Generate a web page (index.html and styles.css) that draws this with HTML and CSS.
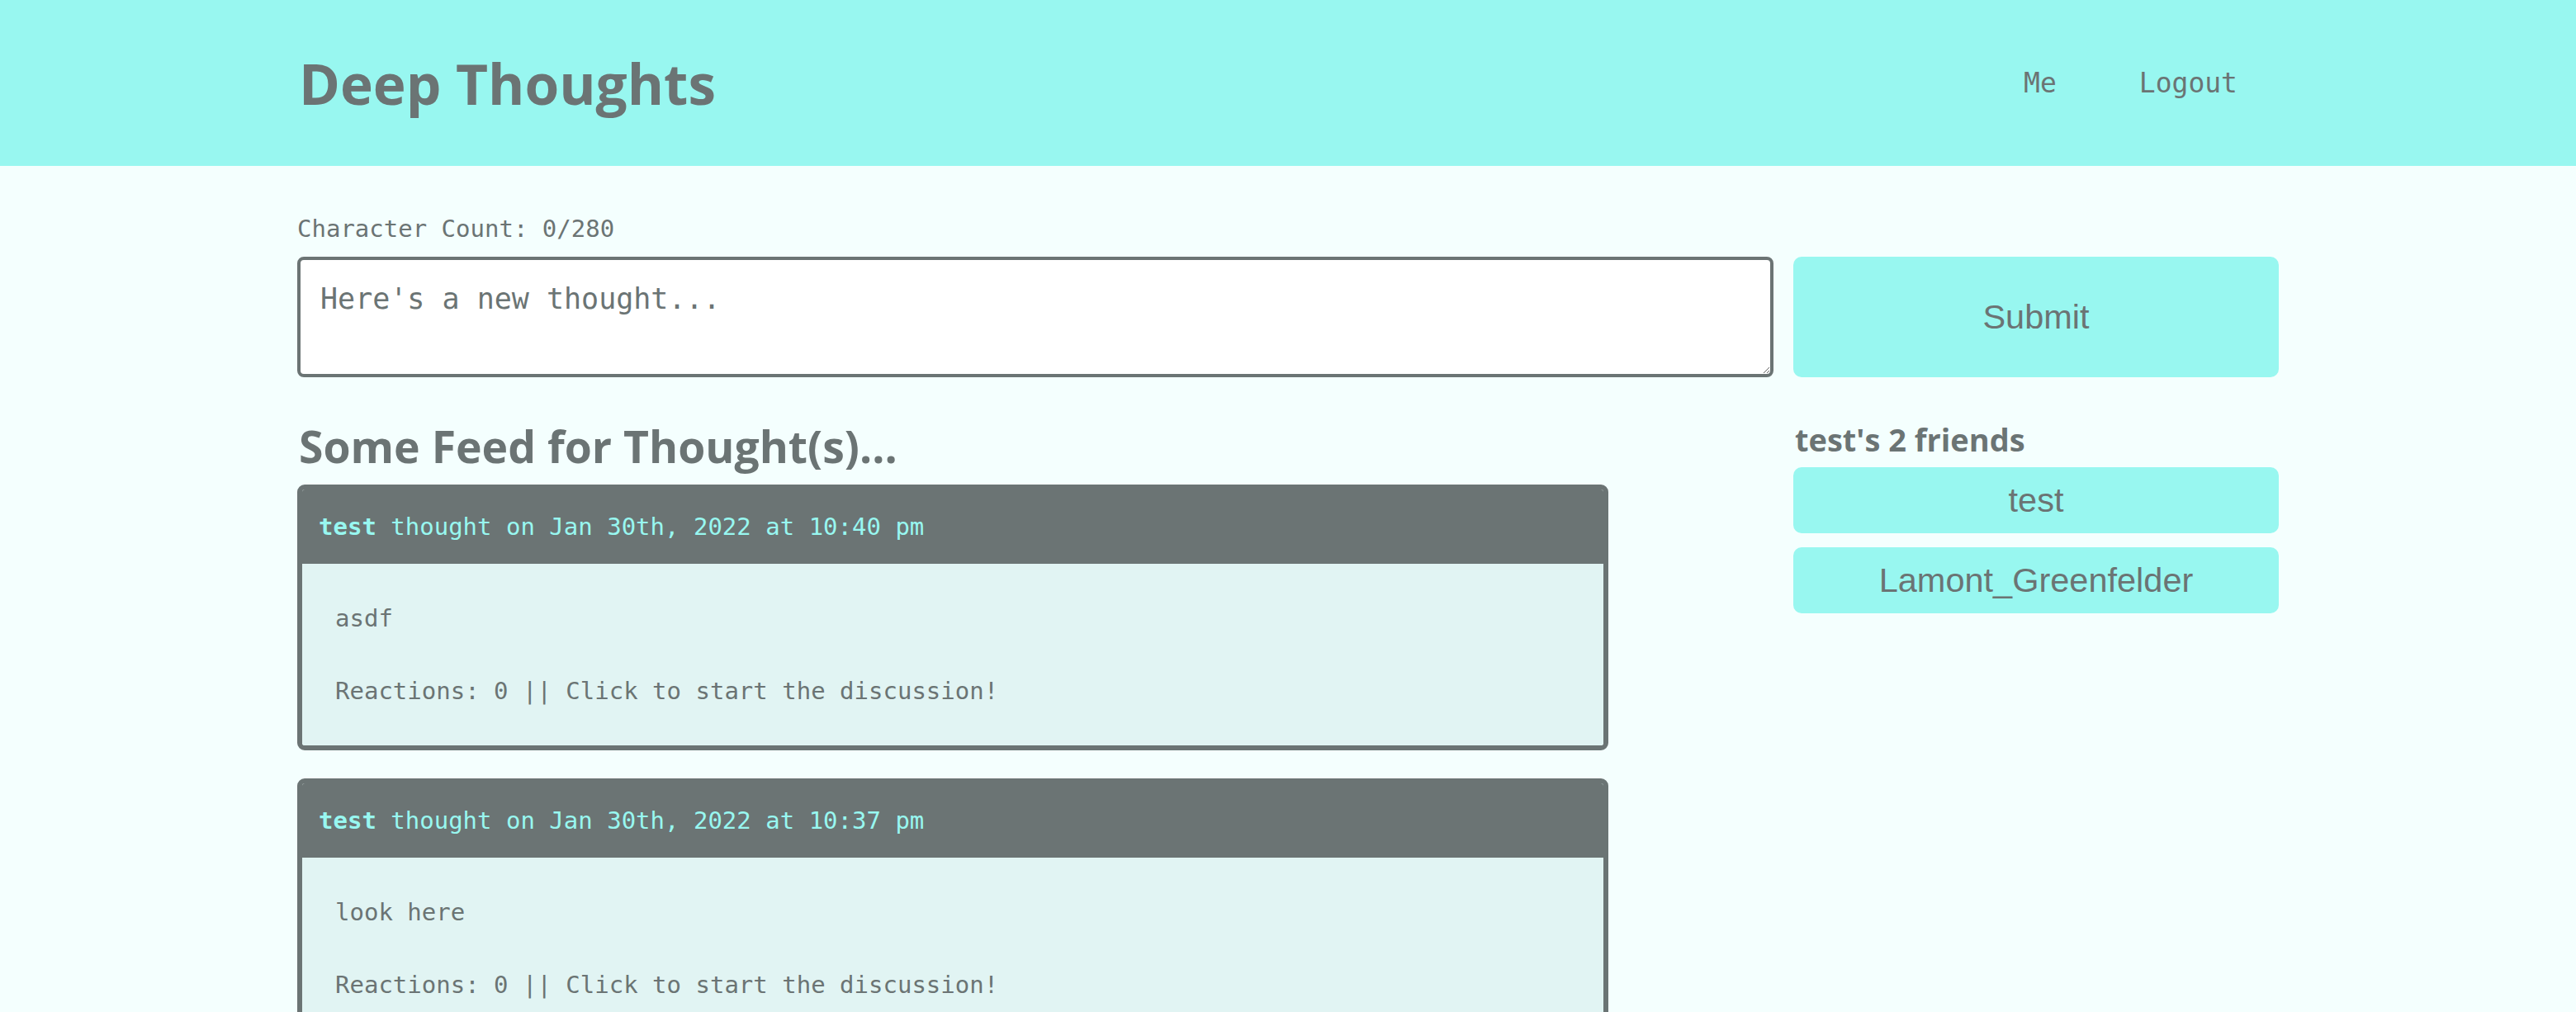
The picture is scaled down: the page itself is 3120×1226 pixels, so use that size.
FILE: index.html
```html
<!DOCTYPE html>
<html lang="en">
<head>
<meta charset="utf-8">
<title>Deep Thoughts</title>
<link rel="stylesheet" href="styles.css">
</head>
<body>
<header class="site-header">
  <div class="container header-row">
    <a class="brand" href="#">Deep Thoughts</a>
    <nav class="nav">
      <a href="#">Me</a>
      <a href="#">Logout</a>
    </nav>
  </div>
</header>
<main class="container">
  <p class="char-count">Character Count: 0/280</p>
  <form class="thought-form">
    <textarea class="thought-input" placeholder="Here's a new thought..."></textarea>
    <button class="btn" type="button">Submit</button>
  </form>
  <div class="content-row">
    <section class="feed">
      <h3 class="feed-title">Some Feed for Thought(s)...</h3>
      <article class="card">
        <div class="card-header"><b>test</b> thought on Jan 30th, 2022 at 10:40 pm</div>
        <div class="card-body">
          <p>asdf</p>
          <p>Reactions: 0 || Click to start the discussion!</p>
        </div>
      </article>
      <article class="card">
        <div class="card-header"><b>test</b> thought on Jan 30th, 2022 at 10:37 pm</div>
        <div class="card-body">
          <p>look here</p>
          <p>Reactions: 0 || Click to start the discussion!</p>
        </div>
      </article>
    </section>
    <aside class="friends">
      <h5 class="friends-title">test's 2 friends</h5>
      <button class="btn friend-btn" type="button">test</button>
      <button class="btn friend-btn" type="button">Lamont_Greenfelder</button>
    </aside>
  </div>
</main>
</body>
</html>
```
FILE: styles.css
```css
html, body {
  margin: 0;
  padding: 0;
}
body {
  background: #f4fffe;
  color: #6b7474;
  font-family: "DejaVu Sans Mono", "Liberation Mono", monospace;
  font-size: 29px;
  line-height: 44px;
}
.container {
  width: 2400px;
  margin: 0 auto;
}
.site-header {
  background: #98f7f0;
  height: 201px;
  display: flex;
  align-items: center;
}
.header-row {
  display: flex;
  align-items: center;
  justify-content: space-between;
}
.brand {
  font-family: "Open Sans", sans-serif;
  font-weight: 700;
  font-size: 67.5px;
  line-height: 80px;
  color: #6b7474;
  text-decoration: none;
  padding-left: 2px;
}
.nav {
  display: flex;
}
.nav a {
  color: #6b7474;
  text-decoration: none;
  font-size: 33px;
  margin: 0 50px;
}
.char-count {
  margin: 54px 0 12px;
}
.thought-form {
  display: grid;
  grid-template-columns: 1788px 588px;
  column-gap: 24px;
}
.thought-input {
  box-sizing: border-box;
  height: 146px;
  width: 100%;
  border: 4px solid #6b7474;
  border-radius: 8px;
  background: #fff;
  padding: 26px 24px;
  font-family: "DejaVu Sans Mono", "Liberation Mono", monospace;
  font-size: 35px;
  line-height: 42px;
  color: #6b7474;
  margin: 0;
}
.thought-input::placeholder {
  color: #6b7474;
  opacity: 1;
}
.btn {
  background: #98f7f0;
  border: none;
  border-radius: 10px;
  color: #6b7474;
  font-family: "Liberation Sans", Arial, sans-serif;
  font-size: 41.5px;
  margin: 0;
  padding: 0;
}
.content-row {
  display: flex;
  justify-content: space-between;
  align-items: flex-start;
  margin-top: 52px;
}
.feed {
  width: 1588px;
}
.feed-title {
  font-family: "Open Sans", sans-serif;
  font-weight: 700;
  font-size: 53.5px;
  line-height: 64px;
  margin: 0 0 14px;
  padding-left: 2px;
}
.card {
  border: 6px solid #6b7474;
  border-radius: 9px;
  overflow: hidden;
  margin-bottom: 34px;
}
.card-header {
  background: #6b7474;
  color: #98f7f0;
  padding: 23px 20px;
}
.card-header b {
  font-weight: 700;
}
.card-body {
  background: #e1f4f3;
  padding: 44px 40px;
  display: flex;
  flex-direction: column;
  gap: 44px;
}
.card-body p {
  margin: 0;
}
.friends {
  width: 588px;
  display: flex;
  flex-direction: column;
}
.friends-title {
  font-family: "Open Sans", sans-serif;
  font-weight: 700;
  font-size: 38px;
  line-height: 46px;
  margin: 0 0 11px;
  padding-left: 2px;
}
.friend-btn {
  height: 80px;
  margin-bottom: 17px;
}
```
